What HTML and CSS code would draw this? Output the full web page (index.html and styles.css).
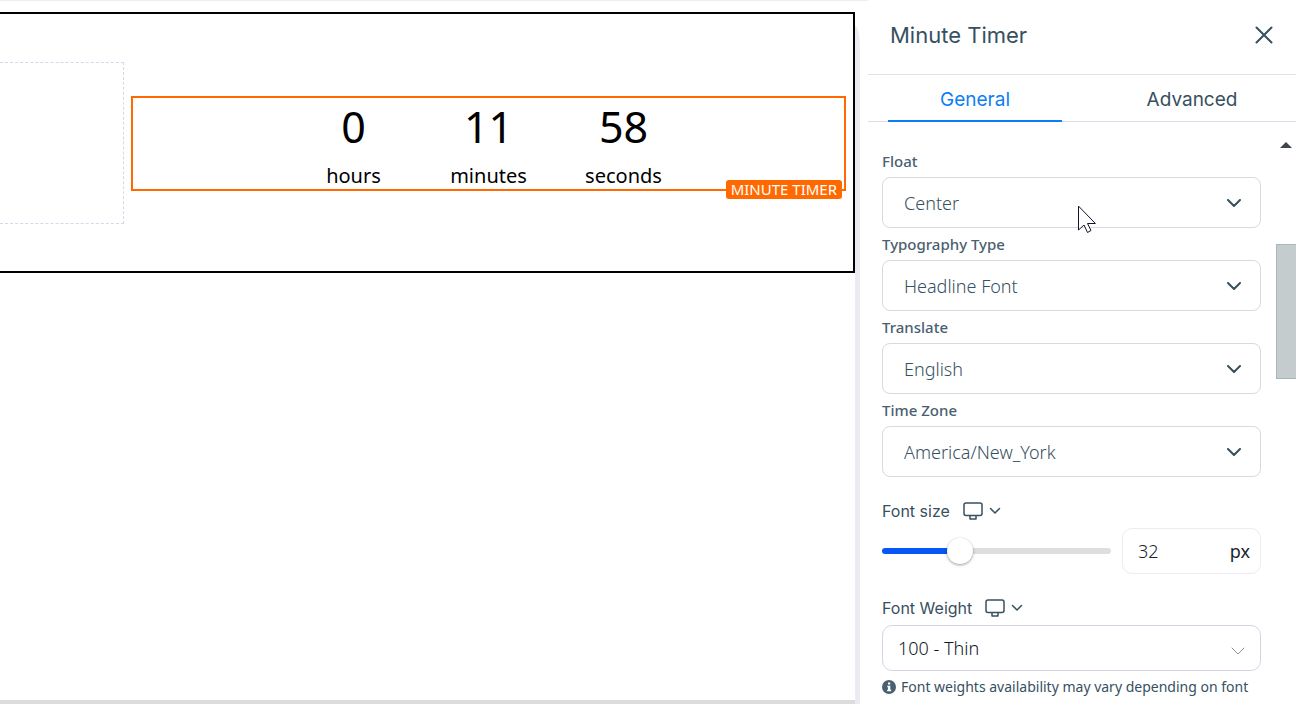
FILE: index.html
```html
<!DOCTYPE html>
<html lang="en">
<head>
    <meta charset="UTF-8">
    <meta name="viewport" content="width=device-width, initial-scale=1.0">
    <title>Minute Timer</title>
    <link rel="stylesheet" href="styles.css">
</head>
<body>
    <main class="canvas">
        <div class="page">
            <section class="section">
                <div class="empty-column"></div>
                <div class="timer">
                    <div class="unit"><span class="digits">0</span><span class="unit-name">hours</span></div>
                    <div class="unit"><span class="digits">11</span><span class="unit-name">minutes</span></div>
                    <div class="unit"><span class="digits">58</span><span class="unit-name">seconds</span></div>
                    <span class="badge">MINUTE TIMER</span>
                </div>
            </section>
        </div>
    </main>

    <aside class="panel">
        <header class="panel-header">
            <h1>Minute Timer</h1>
            <button type="button" class="close" aria-label="Close">
                <svg width="18" height="18" viewBox="0 0 18 18"><path d="M1.5 1.5l15 15M16.5 1.5l-15 15"/></svg>
            </button>
        </header>

        <nav class="tabs">
            <button type="button" class="tab active">General</button>
            <button type="button" class="tab">Advanced</button>
        </nav>

        <div class="panel-body">
            <form class="settings">
                <label class="label" for="float">Float</label>
                <div class="select-wrap">
                    <select id="float" class="select"><option>Center</option><option>Left</option><option>Right</option></select>
                    <svg class="arrow" width="14" height="8" viewBox="0 0 14 8"><path d="M1 1l6 6 6-6"/></svg>
                </div>

                <label class="label" for="typography">Typography Type</label>
                <div class="select-wrap">
                    <select id="typography" class="select"><option>Headline Font</option></select>
                    <svg class="arrow" width="14" height="8" viewBox="0 0 14 8"><path d="M1 1l6 6 6-6"/></svg>
                </div>

                <label class="label" for="translate">Translate</label>
                <div class="select-wrap">
                    <select id="translate" class="select"><option>English</option></select>
                    <svg class="arrow" width="14" height="8" viewBox="0 0 14 8"><path d="M1 1l6 6 6-6"/></svg>
                </div>

                <label class="label" for="timezone">Time Zone</label>
                <div class="select-wrap">
                    <select id="timezone" class="select"><option>America/New_York</option></select>
                    <svg class="arrow" width="14" height="8" viewBox="0 0 14 8"><path d="M1 1l6 6 6-6"/></svg>
                </div>

                <div class="device-row">
                    <label for="fontsize">Font size</label>
                    <button type="button" class="device" aria-label="Desktop">
                        <svg width="20" height="18" viewBox="0 0 20 18"><rect x="1" y="1" width="18" height="12.5" rx="2"/><path d="M7 14v3h6v-3"/></svg>
                        <svg width="12" height="8" viewBox="0 0 12 8"><path d="M1.500 1.500l4.500 4.500 4.500-4.500"/></svg>
                    </button>
                </div>
                <div class="size-row">
                    <input type="range" class="slider" min="0" max="100" value="32" aria-label="Font size slider">
                    <div class="number-box">
                        <input type="text" id="fontsize" class="number" value="32">
                        <span>px</span>
                    </div>
                </div>

                <div class="device-row">
                    <label for="weight">Font Weight</label>
                    <button type="button" class="device" aria-label="Desktop">
                        <svg width="20" height="18" viewBox="0 0 20 18"><rect x="1" y="1" width="18" height="12.5" rx="2"/><path d="M7 14v3h6v-3"/></svg>
                        <svg width="12" height="8" viewBox="0 0 12 8"><path d="M1.500 1.500l4.500 4.500 4.500-4.500"/></svg>
                    </button>
                </div>
                <div class="select-wrap">
                    <select id="weight" class="select weight"><option>100 - Thin</option></select>
                    <svg class="arrow thin" width="14" height="8" viewBox="0 0 14 8"><path d="M1 1l6 6 6-6"/></svg>
                </div>
                <p class="note">
                    <svg width="14" height="14" viewBox="0 0 14 14"><circle cx="7" cy="7" r="7"/><path d="M6 2.500h2.200v2H6zM5.300 5.700h3v4h.9v1.500H5.100V9.700H6V7.200h-.7z"/></svg>
                    Font weights availability may vary depending on font
                </p>
            </form>

            <div class="scrollbar">
                <span class="scroll-up"></span>
                <span class="thumb"></span>
            </div>
        </div>
    </aside>

    <!-- mouse pointer -->
    <svg class="pointer" width="20" height="28" viewBox="0 0 20 28"><path d="M1.500 1.500v23.500l5.500-5 3.500 7.500 3.500-2-3.500-7h7.500z"/></svg>
</body>
</html>
```
FILE: styles.css
```css
* {
    box-sizing: border-box;
}

body {
    margin: 0;
    height: 100vh;
    display: flex;
    overflow: hidden;
    background-color: #fff;
    font-family: "Noto Sans", "Open Sans", sans-serif;
    color: #37505f;
}

button,
input,
select {
    font-family: inherit;
    color: inherit;
    margin: 0;
}

button {
    border: none;
    padding: 0;
    background: none;
    cursor: pointer;
}

svg {
    fill: none;
    stroke: #37505f;
    stroke-linecap: round;
    stroke-linejoin: round;
}

/* Canvas */
.canvas {
    flex: 1;
    display: flex;
    border-top: 1px solid #eee;
    padding: 11px 13px 4px 0;
    overflow: hidden;
}

.page {
    flex: 1;
    background-color: #fff;
    border-top-right-radius: 5px 20px;
    box-shadow: 0 4px 0 #dcdcdc, 5px 14px 0 #eeeaf2;
}

.section {
    display: flex;
    align-items: center;
    gap: 7px;
    padding: 48px 7px 47px 0;
    border: 2px solid #000;
    border-left: none;
    background-color: #fff;
}

.empty-column {
    width: 124px;
    height: 162px;
    border: 1px dashed #d9d6ec;
    border-left: none;
}

.timer {
    position: relative;
    flex: 1;
    display: flex;
    justify-content: center;
    border: 2px solid #ff6900;
    color: #000;
}

.unit {
    width: 135px;
    display: flex;
    flex-direction: column;
    align-items: center;
    gap: 6px;
}

.digits {
    font-size: 43px;
    line-height: 58px;
}

.unit-name {
    font-size: 20px;
    line-height: 27px;
}

.badge {
    position: absolute;
    right: 2px;
    bottom: -10px;
    padding: 0 5px;
    border-radius: 3px;
    background-color: #ff6900;
    color: #fff;
    font-size: 15px;
    line-height: 19px;
}

/* Settings panel */
.panel {
    width: 428px;
    display: flex;
    flex-direction: column;
}

.panel-header {
    display: flex;
    justify-content: space-between;
    align-items: center;
    height: 75px;
    padding: 0 23px 4px 22px;
    border-bottom: 1px solid #dde4ee;
}

.panel-header h1 {
    margin: 0;
    font-family: Inter, sans-serif;
    font-size: 22px;
    font-weight: 400;
}

.close svg {
    display: block;
    stroke-width: 2;
}

.tabs {
    display: flex;
    justify-content: space-between;
    height: 47px;
    padding: 0 17px 0 20px;
    border-bottom: 1px solid #d9dce8;
}

.tab {
    width: 174px;
    height: 47px;
    padding-top: 4px;
    font-family: Inter, sans-serif;
    font-size: 19px;
    border-bottom: 2px solid transparent;
}

.tab.active {
    color: #0d7df5;
    border-bottom-color: #0d7df5;
}

.panel-body {
    flex: 1;
    display: flex;
    min-height: 0;
}

.settings {
    flex: 1;
    padding: 23px 15px 0 14px;
}

.label {
    display: block;
    font-size: 15px;
    font-weight: 500;
    line-height: 32px;
    color: #4a6070;
}

.select-wrap {
    position: relative;
    display: flex;
}

.select {
    flex: 1;
    height: 51px;
    padding: 0 21px;
    border: 1px solid #d9d9e0;
    border-radius: 8px;
    background-color: #fff;
    appearance: none;
    font-size: 18px;
    font-weight: 350;
}

.arrow {
    position: absolute;
    right: 20px;
    top: 22px;
    stroke-width: 2;
    pointer-events: none;
}

.select.weight {
    height: 46px;
    padding: 0 15px;
    border-color: #d3d5e2;
    border-radius: 10px;
    color: #111827;
}

.arrow.thin {
    right: 16px;
    stroke: #8a939b;
    stroke-width: 1;
}

.device-row {
    display: flex;
    align-items: center;
    gap: 13px;
    height: 34px;
    margin-top: 17px;
    font-family: Inter, sans-serif;
    font-size: 16px;
}

.device {
    display: flex;
    align-items: center;
    gap: 6px;
}

.device svg {
    stroke-width: 1.5;
}

.size-row {
    display: flex;
    align-items: center;
    gap: 11px;
}

.slider {
    flex: 1;
    min-width: 0;
    height: 26px;
    appearance: none;
    background: none;
}

.slider::-webkit-slider-runnable-track {
    height: 6px;
    border-radius: 3px;
    background: linear-gradient(to right, #0558f5 34%, #dedede 34%);
}

.slider::-webkit-slider-thumb {
    appearance: none;
    width: 26px;
    height: 26px;
    margin-top: -10px;
    border-radius: 50%;
    background-color: #fff;
    box-shadow: 0 1px 3px rgba(0, 0, 0, 0.4);
}

.number-box {
    display: flex;
    align-items: center;
    width: 139px;
    height: 46px;
    padding: 0 10px 0 15px;
    border: 1px solid #ececf2;
    border-radius: 10px;
    font-size: 18px;
    color: #1a2230;
}

.number {
    flex: 1;
    min-width: 0;
    padding: 0;
    border: none;
    background: none;
    font-size: 18px;
    font-weight: 350;
}

.note {
    display: flex;
    align-items: center;
    gap: 5px;
    margin: 0;
    font-size: 14px;
    line-height: 32px;
    white-space: nowrap;
}

.note svg {
    stroke: none;
}

.note circle {
    fill: #4a6070;
}

.note path {
    fill: #fff;
}

/* Scrollbar */
.scrollbar {
    width: 20px;
    display: flex;
    flex-direction: column;
    align-items: center;
    padding-top: 20px;
}

.scroll-up {
    border: 6px solid transparent;
    border-top: none;
    border-bottom-color: #3f454b;
}

.thumb {
    width: 20px;
    height: 135px;
    margin-top: 96px;
    border: 1px solid #abb6bb;
    border-right: none;
    background-color: #c4cccd;
}

.pointer {
    position: absolute;
    left: 1077px;
    top: 205px;
    fill: #fff;
    stroke: #10162a;
    stroke-width: 1;
    pointer-events: none;
}
```
